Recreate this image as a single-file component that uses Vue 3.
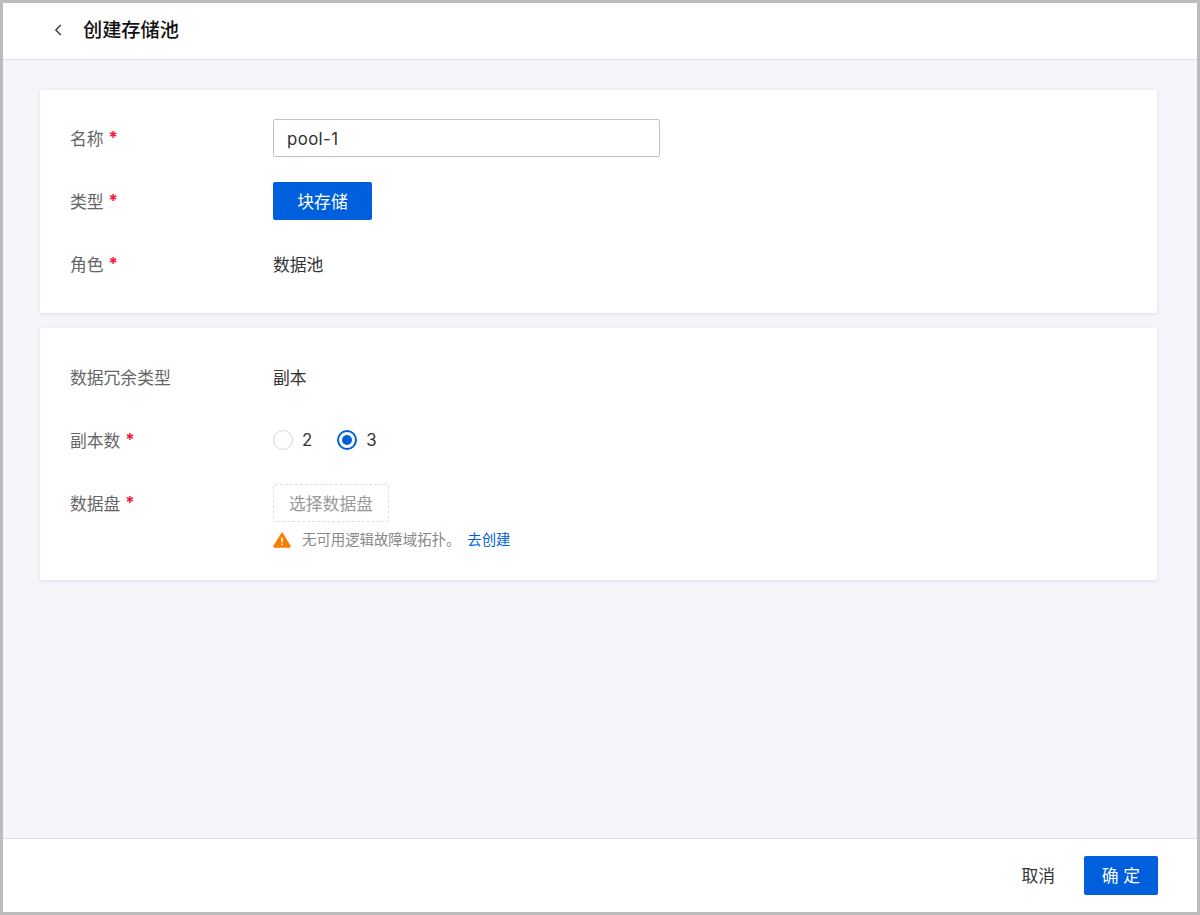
<template>
  <div class="frame">
    <header class="top-bar">
      <button class="back-btn" type="button" aria-label="返回">
        <svg width="12" height="14" viewBox="0 0 12 14" fill="none">
          <path d="M8.8 2 L3.8 7 L8.8 12" stroke="#333" stroke-width="1.3" />
        </svg>
      </button>
      <h1 class="page-title">创建存储池</h1>
    </header>

    <main class="content">
      <section class="card">
        <div class="form-row">
          <label class="form-label">名称<span class="required">*</span></label>
          <input v-model="poolName" class="text-input" type="text" />
        </div>
        <div class="form-row">
          <label class="form-label">类型<span class="required">*</span></label>
          <button class="type-btn" type="button">块存储</button>
        </div>
        <div class="form-row">
          <label class="form-label">角色<span class="required">*</span></label>
          <span class="form-value">数据池</span>
        </div>
      </section>

      <section class="card card-second">
        <div class="form-row">
          <label class="form-label">数据冗余类型</label>
          <span class="form-value">副本</span>
        </div>
        <div class="form-row">
          <label class="form-label">副本数<span class="required">*</span></label>
          <div class="radio-group">
            <span
              v-for="n in replicaOptions"
              :key="n"
              class="radio-item"
              @click="replicas = n"
            >
              <span class="radio" :class="{ 'is-checked': replicas === n }"></span>
              <span class="radio-text">{{ n }}</span>
            </span>
          </div>
        </div>
        <div class="form-row form-row-top">
          <label class="form-label">数据盘<span class="required">*</span></label>
          <div class="disk-field">
            <button class="disk-btn" type="button">选择数据盘</button>
            <div class="hint">
              <svg class="hint-icon" width="18" height="16" viewBox="0 0 18 16">
                <path d="M9 1.2 L17 14 a0.7 0.7 0 0 1 -0.6 1 H1.6 a0.7 0.7 0 0 1 -0.6 -1 Z" fill="#fa7d00" stroke="#fa7d00" stroke-width="1.4" stroke-linejoin="round" />
                <rect x="8.2" y="5.4" width="1.6" height="5" rx="0.6" fill="#fff" />
                <rect x="8.2" y="11.4" width="1.6" height="1.7" rx="0.6" fill="#fff" />
              </svg>
              <span class="hint-text">无可用逻辑故障域拓扑。</span>
              <a class="hint-link" href="#">去创建</a>
            </div>
          </div>
        </div>
      </section>
    </main>

    <footer class="bottom-bar">
      <button class="cancel-btn" type="button">取消</button>
      <button class="confirm-btn" type="button">确 定</button>
    </footer>
  </div>
</template>

<script setup>
import { ref } from "vue";

const poolName = ref("pool-1");
const replicaOptions = [2, 3];
const replicas = ref(3);
</script>

<style>
html,
body {
  margin: 0;
  height: 100%;
}
</style>

<style scoped>
.frame {
  box-sizing: border-box;
  width: 1200px;
  height: 915px;
  border: 3px solid #bcbcbc;
  display: flex;
  flex-direction: column;
  background: #f5f6fa;
  font-family: Inter, "Noto Sans CJK SC", sans-serif;
  font-size: 16.8px;
  line-height: 24px;
  color: #333;
}

.top-bar {
  box-sizing: border-box;
  height: 57px;
  flex: none;
  display: flex;
  align-items: center;
  padding: 0 0 3px 49px;
  background: #fff;
  border-bottom: 1px solid #dfe1e8;
}

.back-btn {
  width: 12px;
  height: 14px;
  padding: 0;
  margin-right: 19px;
  border: 0;
  background: none;
  display: flex;
}

.page-title {
  margin: 0;
  font-size: 19.2px;
  line-height: 26px;
  font-weight: 500;
  color: #111;
}

.content {
  flex: 1;
  padding: 30px 40px 0 37px;
  display: flex;
  flex-direction: column;
  gap: 15px;
}

.card {
  padding: 29px 30px 30px;
  background: #fff;
  border-radius: 2px;
  box-shadow: 0 1px 4px rgba(30, 40, 70, 0.12);
  display: flex;
  flex-direction: column;
  gap: 25px;
}

.card-second {
  padding-top: 30px;
}

.form-row {
  min-height: 38px;
  display: flex;
  align-items: center;
}

.form-row-top {
  align-items: flex-start;
}

.form-label {
  box-sizing: border-box;
  width: 203px;
  height: 38px;
  padding-top: 1px;
  flex: none;
  display: flex;
  align-items: center;
  color: #666;
}

.required {
  margin-left: 5px;
  margin-top: -1px;
  color: #ff1233;
  font-size: 16.8px;
  font-weight: 700;
}

.form-value {
  color: #333;
  padding-top: 1px;
}

.text-input {
  box-sizing: border-box;
  width: 387px;
  height: 38px;
  padding: 1px 13px 0;
  border: 1px solid #bfc3c9;
  border-radius: 2px;
  outline: none;
  font: inherit;
  letter-spacing: 0.4px;
  color: #333;
}

.type-btn {
  box-sizing: border-box;
  width: 99px;
  height: 38px;
  padding: 1px 0 0;
  border: 0;
  border-radius: 2px;
  background: #005fdd;
  color: #fff;
  font: inherit;
}

.radio-group {
  display: flex;
  gap: 25px;
}

.radio-item {
  display: flex;
  align-items: center;
  gap: 9px;
}

.radio {
  box-sizing: border-box;
  width: 20px;
  height: 20px;
  border: 1px solid #d5d7db;
  border-radius: 50%;
  background: #fff;
  display: flex;
  align-items: center;
  justify-content: center;
}

.radio.is-checked {
  border: 2px solid #005fdd;
}

.radio.is-checked::after {
  content: "";
  width: 10px;
  height: 10px;
  border-radius: 50%;
  background: #005fdd;
}

.disk-field {
  display: flex;
  flex-direction: column;
}

.disk-btn {
  box-sizing: border-box;
  width: 116px;
  height: 38px;
  padding: 1px 0 0;
  border: 1px dashed #dcdee2;
  border-radius: 2px;
  background: #fff;
  color: #999;
  font: inherit;
}

.hint {
  margin-top: 8px;
  height: 20px;
  display: flex;
  align-items: center;
  font-size: 14.4px;
}

.hint-icon {
  margin-right: 11px;
}

.hint-text {
  color: #888;
}

.hint-link {
  margin-left: 7px;
  color: #005fdd;
  text-decoration: none;
}

.bottom-bar {
  height: 73px;
  flex: none;
  display: flex;
  align-items: center;
  justify-content: flex-end;
  gap: 29px;
  padding-right: 39px;
  background: #fff;
  border-top: 1px solid #dcdee2;
}

.cancel-btn {
  padding: 0;
  border: 0;
  background: none;
  font: inherit;
  color: #333;
}

.confirm-btn {
  box-sizing: border-box;
  width: 74px;
  height: 39px;
  padding: 0;
  border: 0;
  border-radius: 2px;
  background: #005fdd;
  color: #fff;
  font: inherit;
}
</style>
